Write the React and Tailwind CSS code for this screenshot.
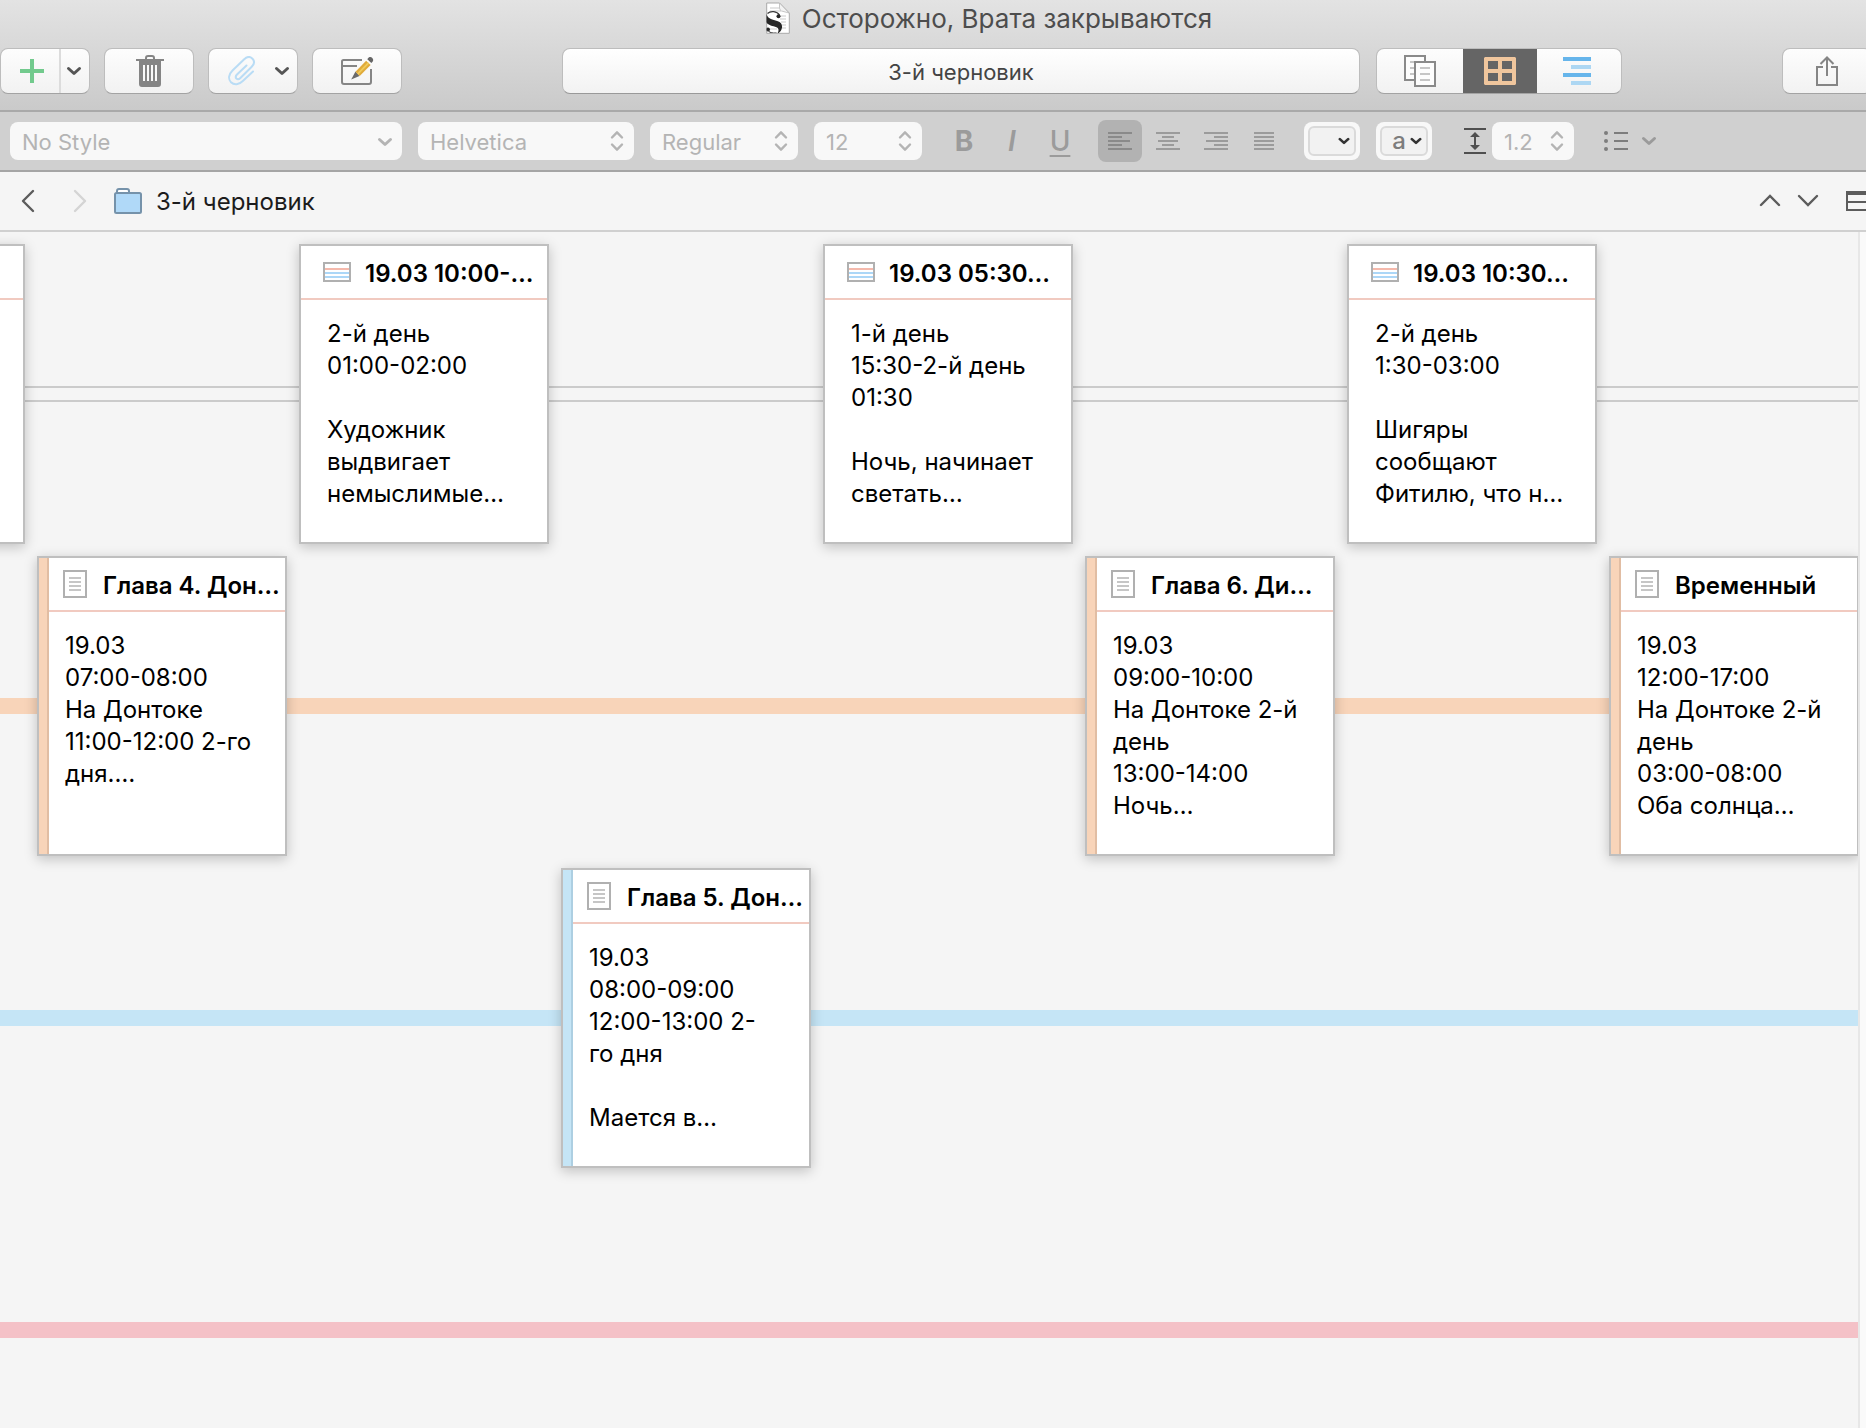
/**
 * Corkboard window: title bar, toolbar, format bar and index cards laid out by label
 */
import { useState } from 'react';

const CARD_DOC = 'doc';
const CARD_NOTE = 'note';

// Cards of each label row. `col` is the column in the eight column board.
const ROWS = [
  {
    id: 'none',
    track: 'h-4 border-y-2 border-[#cbcbcb]',
    cards: [
      { col: 1, kind: CARD_NOTE, title: '', body: '' },
      { col: 3, kind: CARD_NOTE, title: '19.03 10:00-…', body: '2-й день\n01:00-02:00\n\nХудожник\nвыдвигает\nнемыслимые…' },
      { col: 5, kind: CARD_NOTE, title: '19.03 05:30…', body: '1-й день\n15:30-2-й день\n01:30\n\nНочь, начинает\nсветать…' },
      { col: 7, kind: CARD_NOTE, title: '19.03 10:30…', body: '2-й день\n1:30-03:00\n\nШигяры\nсообщают\nФитилю, что н…' },
    ],
  },
  {
    id: 'orange',
    track: 'h-4 bg-[#f8d4b9]',
    strip: 'bg-[#f8d4b9] border-[#e1bda3]',
    cards: [
      { col: 2, kind: CARD_DOC, title: 'Глава 4. Дон…', body: '19.03\n07:00-08:00\nНа Донтоке\n11:00-12:00 2-го\nдня.…' },
      { col: 6, kind: CARD_DOC, title: 'Глава 6. Ди…', body: '19.03\n09:00-10:00\nНа Донтоке 2-й\nдень\n13:00-14:00\nНочь…' },
      { col: 8, kind: CARD_DOC, title: 'Временный', body: '19.03\n12:00-17:00\nНа Донтоке 2-й\nдень\n03:00-08:00\nОба солнца…' },
    ],
  },
  {
    id: 'blue',
    track: 'h-4 bg-[#c5e5f6]',
    strip: 'bg-[#c5e5f6] border-[#adcfe2]',
    cards: [
      { col: 4, kind: CARD_DOC, title: 'Глава 5. Дон…', body: '19.03\n08:00-09:00\n12:00-13:00 2-\nго дня\n\nМается в…' },
    ],
  },
  { id: 'pink', track: 'h-4 bg-[#f4c1c7]', cards: [] },
];

const COLS = {
  1: 'col-start-1',
  2: 'col-start-2',
  3: 'col-start-3',
  4: 'col-start-4',
  5: 'col-start-5',
  6: 'col-start-6',
  7: 'col-start-7',
  8: 'col-start-8',
};

const BTN = 'flex items-center justify-center h-[46px] shrink-0 rounded-lg border border-[#bdbdbd] border-b-[#a3a3a3] bg-gradient-to-b from-[#fdfdfd] to-[#f2f2f2]';

function Chevron({ className, width = 3 }) {
  return (
    <svg className={className} width="16" height="10" viewBox="0 0 16 10" fill="none" stroke="currentColor"
      strokeWidth={width} strokeLinecap="round" strokeLinejoin="round">
      <path d="M2.5 2.5 8 7.5l5.5-5" />
    </svg>
  );
}

function Stepper({ className }) {
  return (
    <svg className={className} width="14" height="22" viewBox="0 0 14 22" fill="none" stroke="currentColor"
      strokeWidth="2.4" strokeLinecap="round" strokeLinejoin="round">
      <path d="M2 7.5 7 2.3l5 5.2M2 14.5l5 5.2 5-5.2" />
    </svg>
  );
}

function ProjectIcon() {
  return (
    <svg width="24" height="32" viewBox="0 0 24 32">
      <clipPath id="page"><path d="M.5 1h13L23 11v20H.5z" /></clipPath>
      <path d="M.7 1h12.8L23.3 11v20.3H.7z" fill="#fff" stroke="#a9a9a9" />
      <path d="M4 6h9M4 9h11M14 14h6M14 17h6M15 20h5M16 23h4M16 26h4M4 27h7" stroke="#c9c9c9" />
      <path d="M13.500 1v5q0 2 2 3l7.500 2z" fill="#f3f3f3" stroke="#b9b9b9" strokeWidth=".8" />
      <g clipPath="url(#page)">
        <path d="M13.500 13C11 9 4.500 8.500 1.500 11.500" fill="none" stroke="#3a3a3a" strokeWidth="1.200" />
        <path d="M0 11.500C1.500 16 5 17.500 9.500 18.500c5 1 7 3.500 6.500 7-.4 3-2 5-4.500 6 1.500-3 1.500-5-1-6.200C7 23.800 2 23.500 0 20z" fill="#262626" />
        <circle cx="12.500" cy="14.200" r="2" fill="#262626" />
        <circle cx="2" cy="27.500" r="2" fill="#262626" />
        <path d="M1.500 28c1.500 2.500 5 3.500 9 3" fill="none" stroke="#3a3a3a" />
      </g>
    </svg>
  );
}

function PlusIcon() {
  return (
    <svg width="24" height="24" viewBox="0 0 24 24">
      <path d="M12 0v24M0 12h24" stroke="#72ca8d" strokeWidth="4" />
    </svg>
  );
}

function TrashIcon() {
  return (
    <svg width="28" height="32" viewBox="0 0 28 32" fill="none">
      <path d="M10 4.500V3q0-2 2-2h4q2 0 2 2v1.500" stroke="#858585" strokeWidth="2" />
      <path d="M0 4h28v2h-3v23q0 3-3 3H6q-3 0-3-3V6H0z" fill="#858585" />
      <path d="M8 10v16M12 10v16M16 10v16M20 10v16" stroke="#fafafa" strokeWidth="2" />
    </svg>
  );
}

function ClipIcon() {
  return (
    <svg width="28" height="30" viewBox="0 0 28 30" fill="none" stroke="#b9dcf5" strokeWidth="2" strokeLinecap="round">
      <path d="M18.500 9.500 9 18.500c-1.500 1.500-1.500 3-.6 4 1.100 1 2.600.9 4-.5L23.500 11c3-3 3.200-6 1-8.300-2.400-2.400-5.600-2-8.300.6L4.500 14.500C.5 18.500 0 23 3 26.200c3.200 3.200 8 2.600 11.800-1.200L25 15.500" />
    </svg>
  );
}

function ComposeIcon() {
  return (
    <svg width="34" height="30" viewBox="0 0 34 30" fill="none">
      <path d="M22 4H3.500Q2 4 2 5.500V26q0 2 2 2h25q2 0 2-2V13M2 10h15" stroke="#858585" strokeWidth="2" />
      <path d="m15.500 15.500-4.300 8 8.300-3.600z" fill="#6a6a6a" />
      <path d="m15.500 15.700 10.600-11 4.500 4.300-10.900 11z" fill="#e0aa3a" />
      <path d="m17.200 17.200 10.700-11 1.300 1.300-10.700 11z" fill="#efcb5b" />
      <path d="M27.300 3.200c1.500-2.600 3.700-2.600 5-1.200 1.500 1.400 1.200 3.600-1 5z" fill="#666" />
    </svg>
  );
}

function PagesIcon() {
  return (
    <svg width="32" height="32" viewBox="0 0 32 32" fill="#fdfdfd" stroke="#8a8a8a" strokeWidth="2">
      <rect x="1" y="1" width="20" height="24" />
      <path d="M6 7h6M6 13h6M6 19h6" stroke="#c6c6c6" />
      <rect x="11" y="7" width="20" height="24" />
      <path d="M16 13h10M16 19h10M16 25h10" stroke="#c6c6c6" />
    </svg>
  );
}

function CorkIcon() {
  return (
    <svg width="32" height="28" viewBox="0 0 32 28">
      <path fillRule="evenodd" fill="#f0c69d"
        d="M1 0h30l1 1v26l-1 1H1l-1-1V1zM4 4v8h10V4zm14 0v8h10V4zM4 16v8h10v-8zm14 0v8h10v-8z" />
    </svg>
  );
}

function OutlineIcon() {
  return (
    <svg width="28" height="28" viewBox="0 0 28 28" strokeWidth="4">
      <path d="M0 2h28M0 18h28" stroke="#66b5eb" />
      <path d="M8 10h20M8 26h20" stroke="#add7f3" />
    </svg>
  );
}

function ShareIcon() {
  return (
    <svg width="22" height="30" viewBox="0 0 22 30" fill="none" stroke="#858585" strokeWidth="2">
      <path d="M7 11H1v18h20V11h-6M11 20V2M4.500 8 11 1.500 17.500 8" />
    </svg>
  );
}

function AlignIcon({ lines }) {
  return (
    <svg width="24" height="18" viewBox="0 0 24 18" stroke="currentColor" strokeWidth="2">
      {lines.map(([from, to], i) => (
        <line key={i} x1={from} x2={to} y1={1 + i * 4} y2={1 + i * 4} />
      ))}
    </svg>
  );
}

const ALIGNS = [
  { id: 'left', label: 'Align left', lines: [[0, 24], [0, 14], [0, 22], [0, 14], [0, 24]] },
  { id: 'center', label: 'Align center', lines: [[0, 24], [6, 18], [2, 22], [6, 18], [0, 24]] },
  { id: 'right', label: 'Align right', lines: [[0, 24], [10, 24], [2, 24], [10, 24], [0, 24]] },
  { id: 'justify', label: 'Justify', lines: [[2, 22], [2, 22], [2, 22], [2, 22], [2, 22]] },
];

function FormatSelect({ label, value, className, stepper = true }) {
  return (
    <label className={`relative h-[38px] shrink-0 text-[#b4b4b4] ${className}`}>
      <select aria-label={label} defaultValue={value}
        className="appearance-none w-full h-full pl-3 pt-[2px] rounded-lg bg-[#f8f8f8] text-[22px] leading-9">
        <option>{value}</option>
      </select>
      {stepper
        ? <Stepper className="absolute right-[10px] top-2 pointer-events-none" />
        : <Chevron className="absolute right-[9px] top-[15px] pointer-events-none" />}
    </label>
  );
}

function Swatch({ label, children }) {
  return (
    <button aria-label={label} className="h-[38px] w-14 shrink-0 rounded-lg bg-[#f8f8f8] p-1">
      <span className="flex h-full items-center justify-end gap-1 rounded-md border-2 border-[#dadada] bg-[#f2f2f2] pr-1">
        {children}
        <Chevron className="w-3 text-[#333]" width={3.6} />
      </span>
    </button>
  );
}

function NoteIcon() {
  return (
    <svg className="shrink-0" width="28" height="20" viewBox="0 0 28 20" fill="#fff" strokeWidth="2">
      <rect x="1" y="1" width="26" height="18" stroke="#b0b0b0" />
      <path d="M2 7h24" stroke="#f4b9ac" />
      <path d="M2 11h24M2 15h24" stroke="#acd7f7" />
    </svg>
  );
}

function DocIcon() {
  return (
    <svg className="shrink-0" width="24" height="28" viewBox="0 0 24 28" fill="#fff" strokeWidth="2">
      <rect x="1" y="1" width="22" height="26" stroke="#b0b0b0" />
      <path d="M6 8h12M6 12h12M6 16h12M6 20h12" stroke="#c6c6c6" />
    </svg>
  );
}

function IndexCard({ card, strip }) {
  return (
    <article className={`relative flex h-[300px] border-2 border-[#bfbfbf] bg-white shadow-[0_3px_12px_rgba(0,0,0,0.22)] ${COLS[card.col]}`}>
      {strip && <div className={`w-[10px] shrink-0 border-r-2 ${strip}`} />}
      <div className="min-w-0 flex-1">
        <header className={`flex h-[54px] items-center border-b-2 border-[#f1cac0] ${strip ? 'gap-4 pl-[14px]' : 'gap-[14px] pl-[22px]'}`}>
          {card.kind === CARD_DOC ? <DocIcon /> : <NoteIcon />}
          <h2 className="whitespace-nowrap pt-1 text-2xl font-semibold leading-8">{card.title}</h2>
        </header>
        <p className={`whitespace-pre pt-[18px] text-2xl leading-8 ${strip ? 'pl-4' : 'pl-[26px]'}`}>{card.body}</p>
      </div>
    </article>
  );
}

export default function App() {
  const [align, setAlign] = useState('left');

  return (
    <div className="flex h-screen flex-col overflow-hidden bg-[#f5f5f5] font-['Inter',sans-serif] text-black">
      {/* Title bar and toolbar */}
      <header className="h-28 shrink-0 border-b-2 border-[#a9a9a9] bg-gradient-to-b from-[#e3e3e3] to-[#cacaca]">
        <div className="flex h-12 items-start justify-center gap-3 pl-28 pt-[2px]">
          <ProjectIcon />
          <h1 className="text-[26px] leading-[34px] text-[#4d4d4d]">Осторожно, Врата закрываются</h1>
        </div>

        <div className="-mr-1.5 flex items-center">
          <div className="flex gap-[14px] text-[#555]">
            <div className={`${BTN} w-[90px]`}>
              <button aria-label="Add" className="flex h-full flex-1 items-center justify-center border-r-2 border-[#dcdcdc] pl-1"><PlusIcon /></button>
              <button aria-label="Add options" className="flex h-full w-7 items-center justify-center pr-[2px]"><Chevron /></button>
            </div>
            <button aria-label="Move to trash" className={`${BTN} w-[90px] pl-[2px]`}><TrashIcon /></button>
            <button aria-label="Attach" className={`${BTN} w-[90px] gap-[18px] pl-3`}><ClipIcon /><Chevron /></button>
            <button aria-label="Compose" className={`${BTN} w-[90px]`}><ComposeIcon /></button>
          </div>

          <button className="mx-40 h-[46px] flex-1 rounded-lg border border-[#bdbdbd] border-b-[#999] bg-gradient-to-b from-white to-[#f2f2f2] pt-[2px] text-[22px] text-[#444]">
            3-й черновик
          </button>

          <div className={`${BTN} -ml-36 mr-40 overflow-hidden`}>
            <button aria-label="Document view" className="flex h-full w-[86px] items-center justify-center"><PagesIcon /></button>
            <button aria-label="Corkboard view" className="flex h-full w-[74px] items-center justify-center bg-[#656565]"><CorkIcon /></button>
            <button aria-label="Outline view" className="flex h-full w-[84px] items-center justify-center pr-1"><OutlineIcon /></button>
          </div>

          <button aria-label="Share" className={`${BTN} w-[90px]`}><ShareIcon /></button>
        </div>
      </header>

      {/* Format bar */}
      <div className="flex h-[60px] shrink-0 items-center border-b-2 border-[#a5a5a5] bg-[#d0d0d0] pl-[10px] text-[#9b9b9b]">
        <div className="flex gap-4">
          <FormatSelect label="Style" value="No Style" className="w-[392px]" stepper={false} />
          <FormatSelect label="Font" value="Helvetica" className="w-[216px]" />
          <FormatSelect label="Typeface" value="Regular" className="w-[148px]" />
          <FormatSelect label="Size" value="12" className="w-[108px]" />
        </div>

        <div className="ml-[18px] flex text-[28px] leading-8">
          <button aria-label="Bold" className="w-12 font-bold">B</button>
          <button aria-label="Italic" className="w-12 font-semibold italic">I</button>
          <button aria-label="Underline" className="flex w-12 justify-center font-medium">
            <span className="underline decoration-2 underline-offset-4">U</span>
          </button>
        </div>

        <div className="ml-[14px] flex gap-1">
          {ALIGNS.map(a => (
            <button key={a.id} aria-label={a.label} onClick={() => setAlign(a.id)}
              className={`flex h-[42px] w-11 items-center justify-center rounded-lg
                ${align === a.id ? 'bg-[#b2b2b2] text-[#8a8a8a]' : ''}`}>
              <AlignIcon lines={a.lines} />
            </button>
          ))}
        </div>

        <div className="ml-[18px] flex gap-4">
          <Swatch label="Text color" />
          <Swatch label="Highlight color"><span className="text-2xl font-medium leading-6 text-[#7d7d7d]">a</span></Swatch>
        </div>

        <svg className="ml-8 mr-[6px] shrink-0" width="22" height="26" viewBox="0 0 22 26" stroke="#4f4f4f" strokeWidth="2">
          <path d="M0 1h22M0 25h22M11 6v14" />
          <path d="m11 4 5 5H6zM11 22l5-5H6z" fill="#4f4f4f" stroke="none" />
        </svg>
        <FormatSelect label="Line spacing" value="1.2" className="w-[82px]" />

        <button aria-label="Lists" className="ml-[30px] flex items-center gap-[13px]">
          <svg width="24" height="20" viewBox="0 0 24 20" fill="#7d7d7d">
            <circle cx="2" cy="2" r="2" /><circle cx="2" cy="10" r="2" /><circle cx="2" cy="18" r="2" />
            <path d="M10 1h14v2H10zM10 9h14v2H10zM10 17h14v2H10z" />
          </svg>
          <Chevron />
        </button>
      </div>

      {/* Editor header */}
      <div className="flex h-[60px] shrink-0 items-center border-b-2 border-[#d0d0d0] pl-[21px] text-[#5c5c5c]">
        <button aria-label="Back">
          <svg width="14" height="24" viewBox="0 0 14 24" fill="none" stroke="currentColor" strokeWidth="2.4" strokeLinecap="round" strokeLinejoin="round"><path d="M12 2 2 12l10 10" /></svg>
        </button>
        <button aria-label="Forward" className="ml-[38px] text-[#d4d4d4]">
          <svg width="14" height="24" viewBox="0 0 14 24" fill="none" stroke="currentColor" strokeWidth="2.4" strokeLinecap="round" strokeLinejoin="round"><path d="m2 2 10 10L2 22" /></svg>
        </button>
        <svg className="ml-[27px]" width="28" height="26" viewBox="0 0 28 26" stroke="#7592aa" strokeWidth="2">
          <path d="M3 5V3q0-2 2-2h8q2 0 2 2v2" fill="#fff" />
          <rect x="1" y="5" width="26" height="20" rx="1.500" fill="#b0d9f8" />
        </svg>
        <span className="ml-[14px] pt-[2px] text-2xl text-[#1c1c1c]">3-й черновик</span>

        <div className="-mr-2 ml-auto flex items-center gap-4">
          <button aria-label="Previous document">
            <svg width="22" height="14" viewBox="0 0 22 14" fill="none" stroke="currentColor" strokeWidth="2.4" strokeLinecap="round"><path d="m2 11 9-9 9 9" /></svg>
          </button>
          <button aria-label="Next document">
            <svg width="22" height="14" viewBox="0 0 22 14" fill="none" stroke="currentColor" strokeWidth="2.4" strokeLinecap="round"><path d="m2 2 9 9 9-9" /></svg>
          </button>
          <button aria-label="Split editor" className="ml-[11px]">
            <svg width="28" height="20" viewBox="0 0 28 20" fill="none" stroke="currentColor" strokeWidth="2"><path d="M1 1h26v18H1zM1 3h26M1 11h26" /></svg>
          </button>
        </div>
      </div>

      {/* Corkboard */}
      <div className="flex min-h-0 flex-1">
        <main className="flex min-w-0 flex-1 flex-col gap-3 overflow-hidden pt-3">
          {ROWS.map(row => (
            <section key={row.id} className="relative h-[300px] shrink-0">
              <div className={`absolute inset-x-0 top-[142px] ${row.track}`} />
              <div className="-ml-[225px] grid grid-cols-[repeat(8,250px)] grid-rows-[300px] gap-3">
                {row.cards.map(card => <IndexCard key={card.col} card={card} strip={row.strip} />)}
              </div>
            </section>
          ))}
        </main>
        <div className="w-2 shrink-0 border-l-2 border-[#e7e7e7] bg-[#fafafa]" />
      </div>
    </div>
  );
}
